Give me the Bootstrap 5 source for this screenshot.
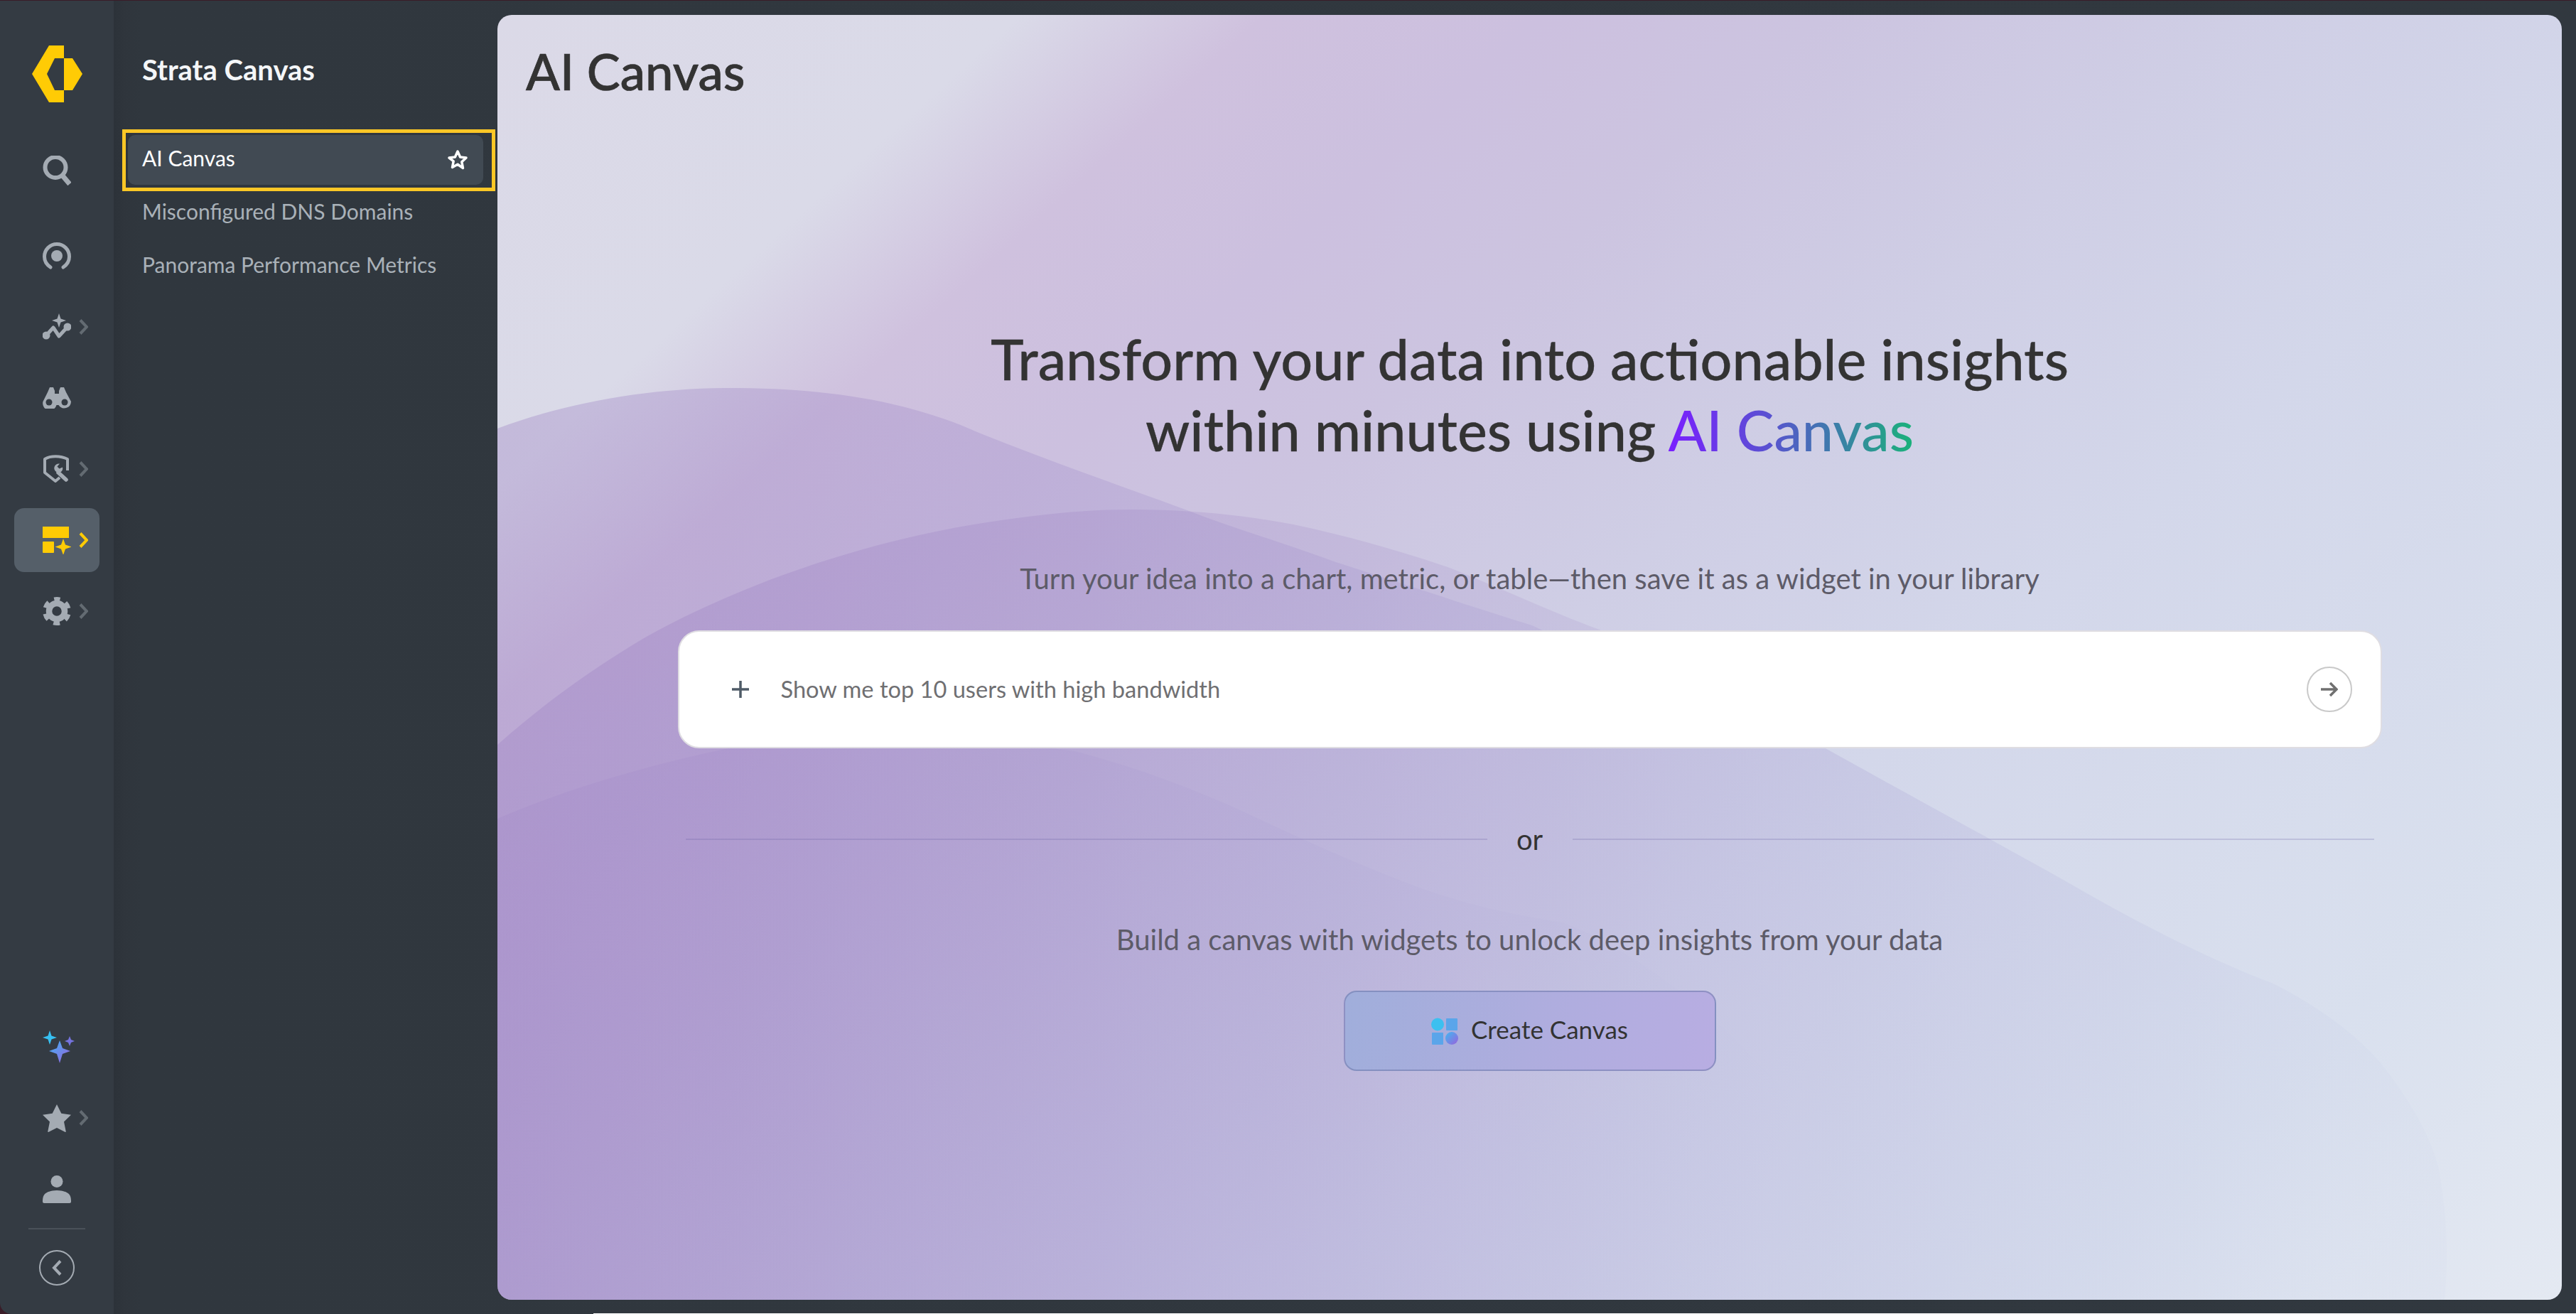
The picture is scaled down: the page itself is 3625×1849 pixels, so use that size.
<!DOCTYPE html>
<html lang="en">
<head>
    <meta charset="UTF-8">
    <meta name="viewport" content="width=device-width, initial-scale=1.0">
    <title>AI Canvas</title>
    <link href="https://cdn.jsdelivr.net/npm/bootstrap@5.3.3/dist/css/bootstrap.min.css" rel="stylesheet">
    <style>
        html, body { height: 100%; }
        body { background: #3a1c28; font-family: Lato, "Open Sans", sans-serif; overflow: hidden; }
        .app-shell { height: 1849px; padding-top: 1px; }
        .rail { width: 160px; background: #343b43; border-bottom-left-radius: 16px; padding-top: 63px; }
        .rail-logo { height: 80px; margin-bottom: 51px; }
        .rail-item { width: 120px; height: 90px; margin-bottom: 10px; border-radius: 14px; padding-left: 40px; }
        .rail-item.rail-search { margin-bottom: 30px; }
        .rail-item.active-item { background: #555f69; }
        .rail-ico { width: 40px; flex: none; display: block; }
        .rail-chev { width: 13px; height: 22px; margin-left: 11px; flex: none; }
        .rail-rule { width: 80px; height: 2px; background: #4a5159; margin: 0 0 29px; }
        .rail-collapse { width: 50px; height: 50px; border: 2px solid #a4abb3; border-radius: 50%; margin-bottom: 40px; }
        .side-col { flex: 1; background: linear-gradient(90deg, #2c3239 0, #2f353c 14px, #30373e 40px, #31383f 100%); }
        .side-panel { width: 540px; padding: 0 3px 0 12px; }
        .side-title { font-size: 40px; font-weight: 700; color: #f4f6f8; line-height: 48px; margin: 73px 0 60px 28px; }
        .side-frame { border: 5px solid #fcc726; padding: 3px 12px 5px 3px; height: 87px; margin-bottom: 1px; }
        .side-active { height: 70px; border-radius: 10px; background: #414a53; padding: 0 21px 0 20px; color: #fff; font-size: 30px; }
        .side-active-label { padding-bottom: 5px; }
        .side-link { height: 54px; margin-bottom: 21px; padding-left: 28px; color: #a9b1b8; font-size: 30px; }
        .canvas-wrap { flex: 1; padding: 20px 20px 20px 0; }
        .canvas-panel { position: relative; overflow: hidden; height: 100%; border-radius: 20px;
            background: linear-gradient(138deg, #dbd9e7 0%, #dadae8 15%, #cfc1de 22%, #ccc0df 30%, #ccc4e0 38%, #cfcee5 50%, #d3d7ea 63%, #d9e0ee 85%, #e4e9f2 100%); }
        .canvas-bg { position: absolute; left: 0; top: 0; width: 100%; height: 100%; }
        .canvas-body { position: relative; height: 100%; }
        .canvas-title { font-size: 70.500px; font-weight: 500; color: #333; line-height: 82px; margin: 0; padding: 38px 0 0 40px; -webkit-text-stroke: .7px #333; }
        .hero-title { font-size: 79px; font-weight: 500; color: #333; line-height: 100px; margin: 314px 0 0; -webkit-text-stroke: .3px #333; }
        .grad-word { background: linear-gradient(90deg, #7a1fff 0%, #5a50d2 40%, #1ab27a 100%); -webkit-background-clip: text; background-clip: text; color: transparent; -webkit-text-stroke: 0; }
        .hero-sub { font-size: 40px; color: #5d5b68; line-height: 50px; margin: 134px 0 0; }
        .prompt-box { width: 2398px; height: 166px; margin-top: 48px; background: #fff; border: 2px solid #dfdde2; border-radius: 30px; padding: 0 40px 0 74px; }
        .prompt-text { font-size: 32.600px; color: #6f6f72; margin-left: 45px; }
        .prompt-go { width: 64px; height: 64px; border: 2px solid #c9c9c9; border-radius: 50%; }
        .or-row { width: 2376px; margin-top: 104px; height: 48px; }
        .or-line { flex: 1; height: 2px; background: rgba(100, 90, 160, .22); }
        .or-text { font-size: 40px; color: #333; width: 120px; text-align: center; line-height: 48px; }
        .hero-sub.build-text { margin-top: 92px; }
        .create-btn { width: 524px; height: 113px; margin-top: 47px; font-size: 35px; color: #333; border: 2px solid rgba(110, 120, 170, .55); border-radius: 18px;
            background: linear-gradient(100deg, #a0aedb 0%, #aeadde 50%, #b8ade2 100%); }
        .create-btn:hover { color: #333; }
        .create-label { padding-bottom: 4px; margin-left: 2px; }
        .bottom-edge { height: 1px; background: #fff; position: absolute; left: 835px; right: 0; bottom: 0; }
    </style>
</head>
<body>
<div class="app-shell d-flex position-relative">

    <nav class="rail d-flex flex-column align-items-center flex-shrink-0">
        <svg class="rail-logo" width="71" height="80" viewBox="0 0 71 80"><polygon fill="#ffcb05" points="24,0 45,0 45,18 32,18 21,40 32,63 45,63 45,80 24,80 0,40"/><polygon fill="#ffcb05" points="45,18 57,18 71,40 57,63 45,63"/></svg>

        <div class="rail-item rail-search d-flex align-items-center">
            <svg class="rail-ico" height="42" viewBox="0 0 40 42" fill="none" stroke="#a4abb3"><circle cx="18" cy="16.500" r="14.500" stroke-width="6"/><path d="M27 27l11 13" stroke-width="7"/></svg>
        </div>
        <div class="rail-item d-flex align-items-center">
            <svg class="rail-ico" height="38" viewBox="0 0 40 38" fill="none"><path d="M11 35C5 31 2.500 26 2.500 20a17.500 17.500 0 0 1 35 0c0 6-2.500 11-8.500 15" stroke="#a4abb3" stroke-width="5" stroke-linecap="round"/><circle cx="20" cy="19" r="8" fill="#a4abb3"/></svg>
        </div>
        <div class="rail-item d-flex align-items-center">
            <svg class="rail-ico" height="38" viewBox="60 443 40 38"><path fill="#a4abb3" d="M83 443l2.500 7.500 7.500 2.500-7.500 2.500-2.500 7.500-2.500-7.500-7.500-2.500 7.500-2.500z"/><path d="M65 474l10-11 8 12 12-13" fill="none" stroke="#a4abb3" stroke-width="5" stroke-linejoin="round"/><circle cx="65" cy="474" r="5.500" fill="#a4abb3"/><circle cx="95" cy="462" r="5.500" fill="#a4abb3"/></svg>
            <svg class="rail-chev" viewBox="0 0 13 22" fill="none" stroke="#636b72" stroke-width="4"><path d="M2 1.500L11 11l-9 9.500"/></svg>
        </div>
        <div class="rail-item d-flex align-items-center">
            <svg class="rail-ico" height="30" viewBox="0 0 40 30"><path fill="#a4abb3" fill-rule="evenodd" d="M10 0h5l2 5v4h6V5l2-5h5l3 7 7 13a9.500 9.500 0 0 1-17.500 5h-3A9.500 9.500 0 0 1 .500 20L7 7z"/><circle cx="9" cy="21" r="4.500" fill="#343b43"/><circle cx="31" cy="21" r="4.500" fill="#343b43"/></svg>
        </div>
        <div class="rail-item d-flex align-items-center">
            <svg class="rail-ico" height="40" viewBox="0 0 40 40" fill="none" stroke="#a4abb3"><path d="M35 22V6C25 1 11 1 3 6v19l15 12 6-5" stroke-width="4" stroke-linejoin="round"/><path d="M33 35L22 25" stroke-width="5.500" stroke-linecap="round"/><path d="M24 12.500a6.500 6.500 0 0 0-7.500 8 6.500 6.500 0 0 0 8.500 4 6.500 6.500 0 0 0 3-7l-4.500 2-3-3z" fill="#a4abb3" stroke="none"/></svg>
            <svg class="rail-chev" viewBox="0 0 13 22" fill="none" stroke="#636b72" stroke-width="4"><path d="M2 1.500L11 11l-9 9.500"/></svg>
        </div>
        <div class="rail-item active-item d-flex align-items-center">
            <svg class="rail-ico" height="40" viewBox="0 0 40 40"><rect x="0" y="1" width="37" height="16" fill="#ffcb05"/><rect x="0" y="22" width="16" height="16" rx="1" fill="#ffcb05"/><path fill="#ffcb05" d="M29 18l3 8.500 8.500 3-8.500 3-3 8.500-3-8.500-8.500-3 8.500-3z"/></svg>
            <svg class="rail-chev" viewBox="0 0 13 22" fill="none" stroke="#ffcb05" stroke-width="4"><path d="M2 1.500L11 11l-9 9.500"/></svg>
        </div>
        <div class="rail-item d-flex align-items-center">
            <svg class="rail-ico" height="40" viewBox="0 0 40 40" fill="none" stroke="#a4abb3"><circle cx="20" cy="20" r="11" stroke-width="8.500"/><circle cx="20" cy="20" r="17" stroke-width="6" stroke-dasharray="9 8.800" stroke-dashoffset="4.500" transform="rotate(-90 20 20)"/></svg>
            <svg class="rail-chev" viewBox="0 0 13 22" fill="none" stroke="#636b72" stroke-width="4"><path d="M2 1.500L11 11l-9 9.500"/></svg>
        </div>

        <div class="mt-auto d-flex flex-column align-items-center">
            <div class="rail-item d-flex align-items-center">
                <svg width="46" height="46" viewBox="0 0 46 46"><defs><linearGradient id="sparkGrad" x1="0" y1="0" x2="1" y2="1"><stop offset="0" stop-color="#3fb4f5"/><stop offset="1" stop-color="#9a5fdc"/></linearGradient></defs><path fill="#37c0f2" d="M10 0l2.500 7.500L20 10l-7.500 2.500L10 20l-2.500-7.500L0 10l7.500-2.500z"/><path fill="url(#sparkGrad)" d="M24 14l4 11 11 4-11 4-4 13-4-13-11-4 11-4z"/><path fill="#7573de" d="M38 8l2 5 5 2-5 2-2 5-2-5-5-2 5-2z"/></svg>
            </div>
            <div class="rail-item d-flex align-items-center">
                <svg class="rail-ico" height="39" viewBox="0 0 40 39"><path fill="#a4abb3" d="M20 0l6.300 12.800L40 14.800l-10 9.800L32.800 38.500a1 1 0 0 1-1 .5L20 33 8.200 39a1 1 0 0 1-1-.5L10 24.600 0 14.800l13.700-2z"/></svg>
                <svg class="rail-chev" viewBox="0 0 13 22" fill="none" stroke="#636b72" stroke-width="4"><path d="M2 1.500L11 11l-9 9.500"/></svg>
            </div>
            <div class="rail-item d-flex align-items-center">
                <svg class="rail-ico" height="39" viewBox="0 0 40 39"><circle cx="20" cy="8.500" r="8.500" fill="#a4abb3"/><path fill="#a4abb3" d="M0 37c0-9 2-15 20-16 18 1 20 7 20 16 0 1-1 2-2 2H2c-1 0-2-1-2-2z"/></svg>
            </div>
            <div class="rail-rule"></div>
            <div class="rail-collapse d-flex align-items-center justify-content-center">
                <svg width="14" height="22" viewBox="0 0 14 22" fill="none" stroke="#a4abb3" stroke-width="4"><path d="M12 1.500L3 11l9 9.500"/></svg>
            </div>
        </div>
    </nav>

    <div class="side-col d-flex">
        <aside class="side-panel flex-shrink-0">
            <div class="side-title">Strata Canvas</div>
            <div class="side-frame">
                <div class="side-active d-flex align-items-center justify-content-between">
                    <span class="side-active-label">AI Canvas</span>
                    <svg width="30" height="30" viewBox="0 0 30 30" fill="none" stroke="#fff" stroke-width="3.500" stroke-linejoin="round"><path d="M15 3l3.600 8 8.400 1-6.200 5.800 1.700 8.700L15 21.200 7.500 25.500l1.700-8.700L3 12l8.400-1z"/></svg>
                </div>
            </div>
            <div class="side-link d-flex align-items-center">Misconfigured DNS Domains</div>
            <div class="side-link d-flex align-items-center">Panorama Performance Metrics</div>
        </aside>

        <main class="canvas-wrap">
            <div class="canvas-panel">
                <svg class="canvas-bg" viewBox="700 21 2905 1808" preserveAspectRatio="none">
                    <defs>
                        <linearGradient id="blobA" gradientUnits="userSpaceOnUse" x1="700" y1="700" x2="3400" y2="1500"><stop offset="0" stop-color="#8f6fbb" stop-opacity=".3"/><stop offset=".5" stop-color="#8f7fc8" stop-opacity=".15"/><stop offset="1" stop-color="#9fa9d8" stop-opacity=".03"/></linearGradient>
                        <linearGradient id="blobB" gradientUnits="userSpaceOnUse" x1="900" y1="900" x2="3400" y2="1500"><stop offset="0" stop-color="#9273bd" stop-opacity=".26"/><stop offset=".5" stop-color="#9273bd" stop-opacity=".13"/><stop offset="1" stop-color="#9aa0d8" stop-opacity=".01"/></linearGradient>
                        <linearGradient id="blobC" gradientUnits="userSpaceOnUse" x1="800" y1="1100" x2="2500" y2="1700"><stop offset="0" stop-color="#9070c0" stop-opacity=".12"/><stop offset=".6" stop-color="#8f80c8" stop-opacity=".06"/><stop offset="1" stop-color="#9aa0d8" stop-opacity="0"/></linearGradient>
                    </defs>
                    <path fill="url(#blobA)" d="M700 603C800 565 920 546 1025 546C1150 546 1270 560 1380 610C1480 650 1580 685 1668 717C1740 745 1810 765 1877 790C1970 820 2060 850 2156 880C2300 950 2430 990 2567 1052C2680 1115 2800 1180 2907 1240C3010 1300 3110 1350 3199 1384C3280 1425 3330 1470 3355 1502C3400 1560 3425 1610 3433 1650C3445 1720 3445 1780 3440 1829H700z"/>
                    <path fill="url(#blobB)" d="M700 1048C760 995 815 955 872 919C940 875 1010 845 1083 816C1180 780 1270 755 1370 738C1450 725 1520 717 1590 717C1680 717 1750 725 1820 738C1900 755 1970 775 2040 799C2130 835 2180 860 2251 886C2350 940 2450 990 2567 1052C2680 1115 2800 1180 2907 1240C3010 1300 3110 1350 3199 1384C3280 1425 3330 1470 3355 1502C3400 1560 3425 1610 3433 1650C3445 1720 3445 1780 3440 1829H700z"/>
                    <path fill="url(#blobC)" d="M700 1152C810 1105 920 1075 1025 1053C1150 1042 1340 1035 1513 1057C1600 1080 1680 1110 1752 1143C1840 1185 1920 1220 1992 1247C2060 1272 2130 1288 2200 1298C2400 1380 2600 1600 2700 1829H700z"/>
                </svg>
                <div class="canvas-body d-flex flex-column">
                    <h1 class="canvas-title">AI Canvas</h1>
                    <div class="d-flex flex-column align-items-center text-center">
                        <h2 class="hero-title">Transform your data into actionable insights<br>within minutes using <span class="grad-word">AI Canvas</span></h2>
                        <p class="hero-sub">Turn your idea into a chart, metric, or table—then save it as a widget in your library</p>
                        <div class="prompt-box d-flex align-items-center">
                            <svg width="24" height="24" viewBox="0 0 24 24" stroke="#4f5b67" stroke-width="3.500"><path d="M12 0v24M0 12h24"/></svg>
                            <span class="prompt-text flex-grow-1 text-start">Show me top 10 users with high bandwidth</span>
                            <div class="prompt-go d-flex align-items-center justify-content-center">
                                <svg width="24" height="22" viewBox="0 0 24 22" fill="none" stroke="#707070" stroke-width="3.500"><path d="M0 11h22M13 2l9 9-9 9"/></svg>
                            </div>
                        </div>
                        <div class="or-row d-flex align-items-center">
                            <div class="or-line"></div>
                            <div class="or-text">or</div>
                            <div class="or-line"></div>
                        </div>
                        <p class="hero-sub build-text">Build a canvas with widgets to unlock deep insights from your data</p>
                        <button type="button" class="btn create-btn d-flex align-items-center justify-content-center gap-3">
                            <svg width="38" height="38" viewBox="0 0 38 38"><defs><linearGradient id="tileGrad" x1="0" y1="0" x2="1" y2="1"><stop offset="0" stop-color="#3fb8f2"/><stop offset="1" stop-color="#9a62dc"/></linearGradient></defs><circle cx="9" cy="9.500" r="9" fill="#3cc0f0"/><rect x="21" y="1" width="16" height="17" rx="1" fill="#5aa5ea"/><rect x="1" y="21" width="16" height="17" rx="1" fill="#5aa5ea"/><circle cx="29" cy="29" r="9" fill="url(#tileGrad)"/></svg>
                            <span class="create-label">Create Canvas</span>
                        </button>
                    </div>
                </div>
            </div>
        </main>
    </div>
    <div class="bottom-edge"></div>
</div>
<script src="https://cdn.jsdelivr.net/npm/bootstrap@5.3.3/dist/js/bootstrap.bundle.min.js"></script>
</body>
</html>
